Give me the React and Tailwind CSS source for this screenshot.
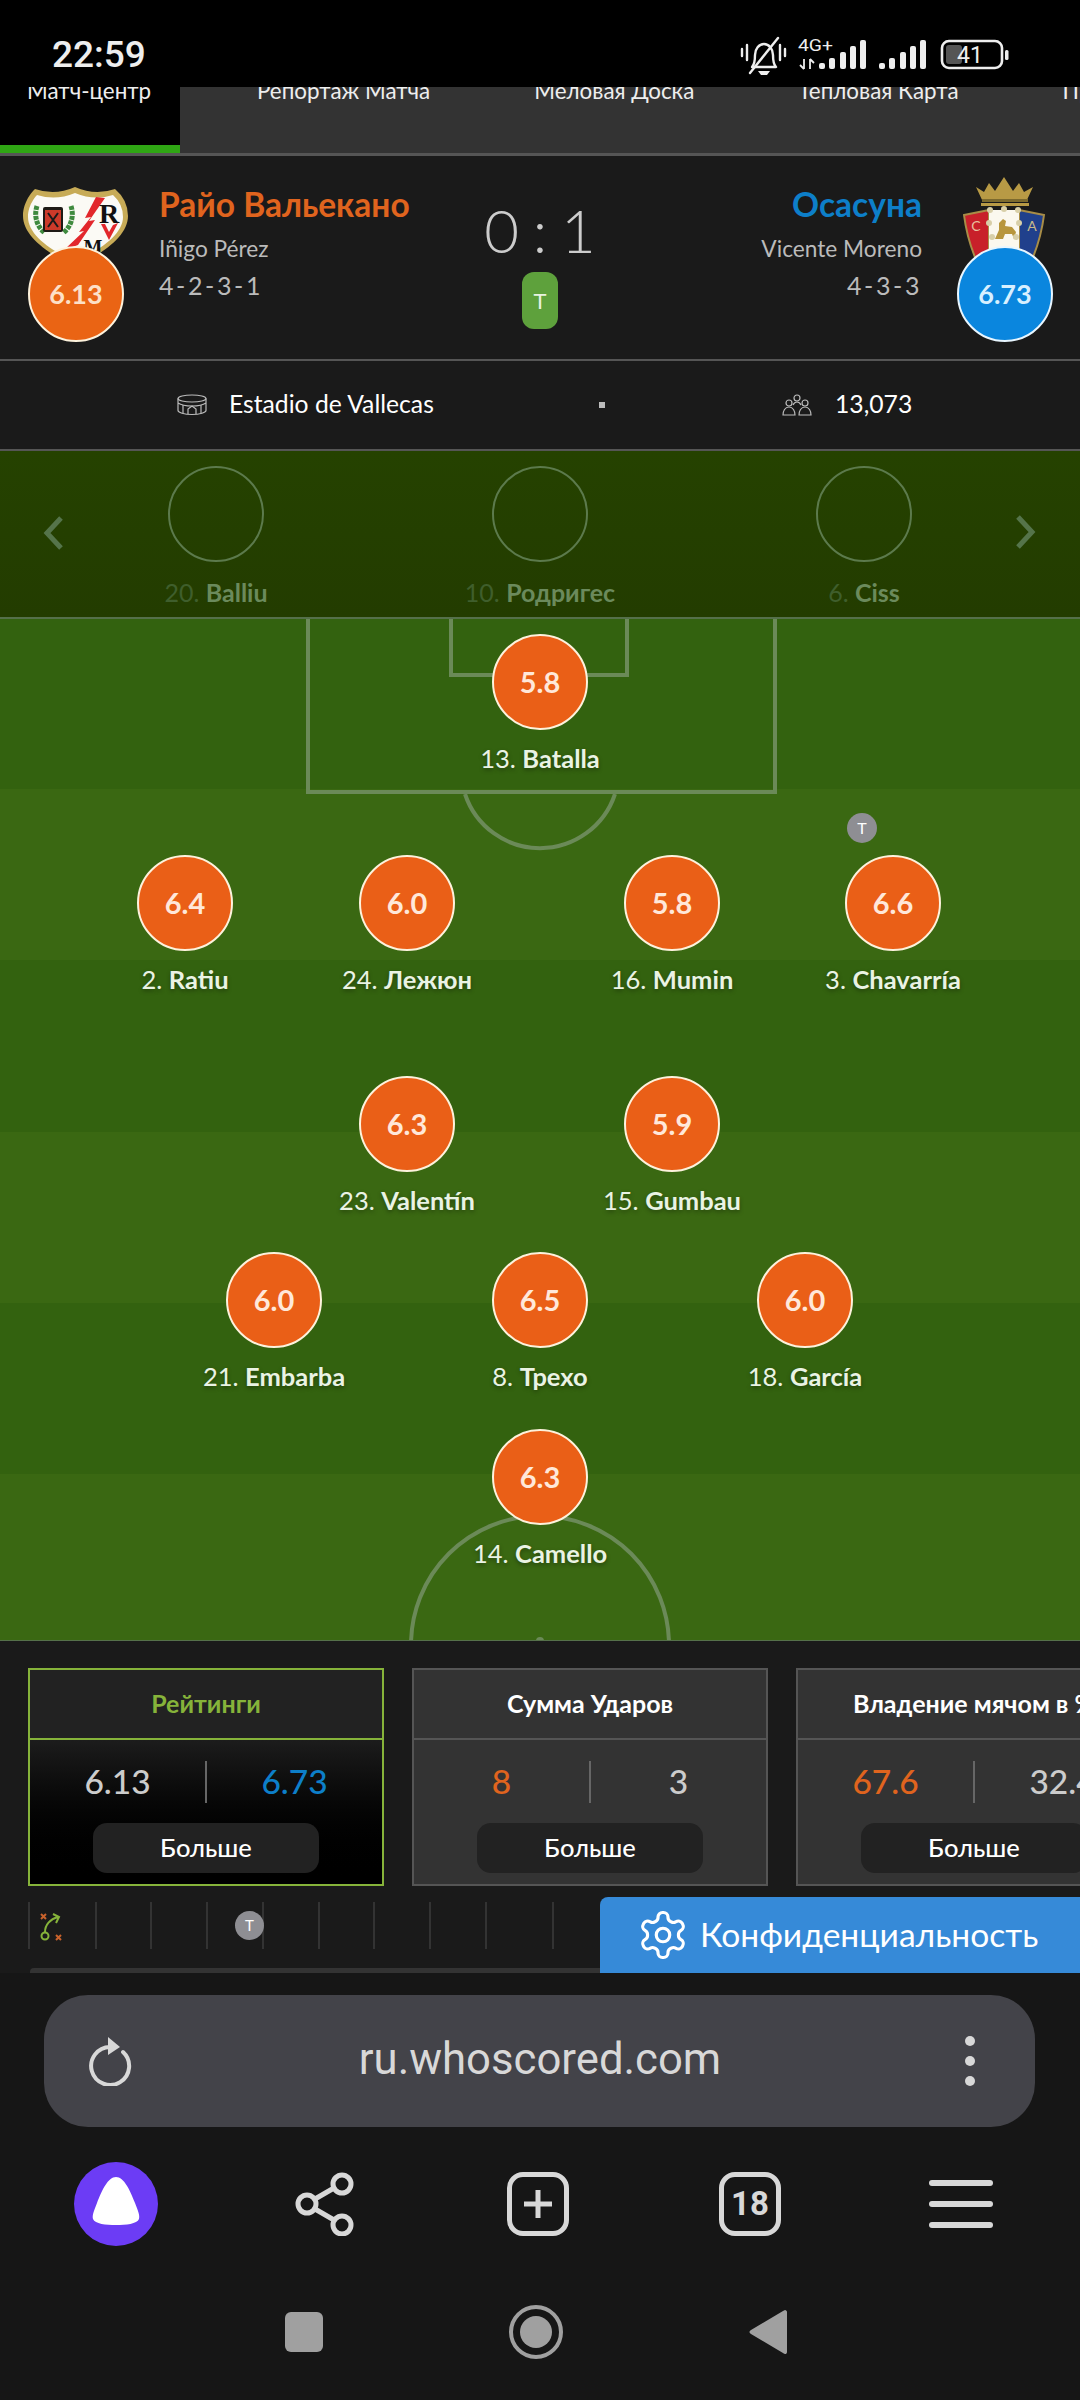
import React from 'react';

const tabs = ['Репортаж Матча', 'Меловая Доска', 'Тепловая Карта', 'Предыдущие'];

const bench = [
  { num: '20.', name: 'Balliu' },
  { num: '10.', name: 'Родригес' },
  { num: '6.', name: 'Ciss' },
];

// centre of the rating circle, in pitch coordinates
const players = [
  { x: 540, y: 63, rating: '5.8', num: '13.', name: 'Batalla' },
  { x: 185, y: 284, rating: '6.4', num: '2.', name: 'Ratiu' },
  { x: 407, y: 284, rating: '6.0', num: '24.', name: 'Лежюн' },
  { x: 672, y: 284, rating: '5.8', num: '16.', name: 'Mumin' },
  { x: 893, y: 284, rating: '6.6', num: '3.', name: 'Chavarría' },
  { x: 407, y: 505, rating: '6.3', num: '23.', name: 'Valentín' },
  { x: 672, y: 505, rating: '5.9', num: '15.', name: 'Gumbau' },
  { x: 274, y: 681, rating: '6.0', num: '21.', name: 'Embarba' },
  { x: 540, y: 681, rating: '6.5', num: '8.', name: 'Трехо' },
  { x: 805, y: 681, rating: '6.0', num: '18.', name: 'García' },
  { x: 540, y: 858, rating: '6.3', num: '14.', name: 'Camello' },
];

const stats = [
  { title: 'Рейтинги', home: '6.13', away: '6.73', active: true },
  { title: 'Сумма Ударов', home: '8', away: '3' },
  { title: 'Владение мячом в %', home: '67.6', away: '32.4' },
];

const StatusIcons = () => (
  <svg width="280" height="50" viewBox="0 0 280 50" fill="none">
    <g stroke="#eee" strokeWidth="2.4" strokeLinecap="round" strokeLinejoin="round">
      <path d="M7 19v7M12 15v15M45 15v15M50 19v7" />
      <path d="M17 37c3-3 3-7 3-12 0-6 4-11 9-11s9 5 9 11c0 5 0 9 3 12z" />
      <path d="M15 43 43 8" />
    </g>
    <path d="M23 41h12l-3 4h-6z" fill="#eee" />
    <text x="63" y="21" fill="#eee" fontSize="16" textLength="35" lengthAdjust="spacingAndGlyphs" fontFamily="Roboto, sans-serif">4G+</text>
    <path d="M69 29v10M65 35l4 4M75 39V29M75 29l4 4" stroke="#eee" strokeWidth="1.8" />
    {[[84, 33], [94, 28], [105, 22], [115, 16], [125, 10]].map(([x, y]) => (
      <rect key={x} x={x} y={y} width="6" height={39 - y} rx="2" fill="#eee" />
    ))}
    {[[144, 33], [154, 28], [165, 22], [175, 16], [185, 10]].map(([x, y]) => (
      <rect key={x} x={x} y={y} width="6" height={39 - y} rx="2" fill="#eee" />
    ))}
    <rect x="207" y="11" width="60" height="27" rx="7" stroke="#eee" strokeWidth="2.6" />
    <rect x="211" y="15" width="16" height="19" rx="3" fill="#555" />
    <text x="235" y="33" textAnchor="middle" fill="#eee" fontSize="23" fontFamily="Roboto, sans-serif">41</text>
    <rect x="270" y="20" width="3.5" height="10" rx="1.5" fill="#eee" />
  </svg>
);

const RayoCrest = () => (
  <svg width="106" height="80" viewBox="0 0 106 80" className="block">
    <path d="M12 3Q32 10 52 1 72 10 92 3 105 14 105 30C105 50 80 68 52 80 25 68 0 50 0 30 0 14 12 3 12 3Z" fill="#c7ab57" />
    <path d="M14 9Q33 15 52 7 71 15 90 9 100 18 100 31C100 48 78 64 52 75 26 64 5 48 5 31 5 18 14 9 14 9Z" fill="#fbfaf5" />
    <path d="M14 20c-3 9-1 20 8 27M48 20c3 9 1 20-8 27" stroke="#3f8a3f" strokeWidth="5" fill="none" strokeDasharray="4 1" />
    <rect x="20" y="21" width="20" height="25" rx="2" fill="#1e1a16" />
    <rect x="22" y="24" width="16" height="20" fill="#cc3a2a" />
    <path d="M25 27l10 14M35 27l-10 14" stroke="#1a1a1a" strokeWidth="2" />
    <path d="M73 11 62 32l6-1-12 15 5-1-20 19 14-5 17-25-6 1 16-23z" fill="#e2272c" />
    <text x="86" y="37" textAnchor="middle" fontSize="28" fontWeight="700" fill="#111" fontFamily="'Liberation Serif', serif">R</text>
    <path d="M78 38l8 16 9-17-5 2-4 7-4-8z" fill="#e2272c" />
    <text x="70" y="68" textAnchor="middle" fontSize="20" fontWeight="700" fill="#111" fontFamily="'Liberation Serif', serif">M</text>
  </svg>
);

const OsasunaCrest = () => (
  <svg width="84" height="85" viewBox="0 0 84 85" className="block">
    <path d="M13 10l8 5 5-9 6 8 9-14 9 14 6-8 5 9 9-5-7 15H20z" fill="#b89a45" />
    <rect x="19" y="22" width="46" height="3" fill="#7c6a2e" />
    <rect x="18" y="26" width="48" height="3" fill="#b89a45" />
    <path d="M1 38 26 33V85H14Q4 62 1 38Z" fill="#c8202a" stroke="#a88d47" strokeWidth="2" />
    <path d="M81 38 56 33V85H68Q78 62 81 38Z" fill="#20408c" stroke="#a88d47" strokeWidth="2" />
    <rect x="26" y="33" width="30" height="52" fill="#fbf8ee" />
    <path d="M32 62l4-9 0-7 4-4 3 2-1 5 7 1 4 5-2 7-2-5-7 0-2 5z" fill="#b8963c" />
    {[[27, 33], [41, 32], [55, 33], [26, 46], [56, 46], [29, 60], [53, 60]].map(([cx, cy]) => (
      <circle key={`${cx}-${cy}`} cx={cx} cy={cy} r="3" fill="#d8cfa8" />
    ))}
    <text x="13" y="54" textAnchor="middle" fontSize="14" fill="#e9c0a0" fontFamily="Lato, sans-serif">C</text>
    <text x="69" y="54" textAnchor="middle" fontSize="14" fill="#c9b98a" fontFamily="Lato, sans-serif">A</text>
  </svg>
);

const TeamRating = ({ value, color, textColor }) => (
  <div className={`relative w-[96px] h-[96px] rounded-full border-2 flex items-center justify-center text-[27px] font-bold ${color} ${textColor}`}>
    {value}
  </div>
);

const StadiumIcon = () => (
  <svg width="30" height="22" viewBox="0 0 30 22" fill="none" stroke="#bbb" strokeWidth="1.2">
    <ellipse cx="15" cy="4.5" rx="14" ry="3.5" />
    <path d="M1 4.5v12c0 2 6 4 14 4s14-2 14-4v-12M1 9c3 2 8 3 14 3s11-1 14-3" />
    <path d="M6 11v8M24 11v8M11 20v-5l4-3 4 3v5" />
  </svg>
);

const CrowdIcon = () => (
  <svg width="30" height="22" viewBox="0 0 30 22" fill="none" stroke="#bbb" strokeWidth="1.2">
    <circle cx="15" cy="4" r="3" />
    <circle cx="7" cy="9" r="3" />
    <circle cx="23" cy="9" r="3" />
    <path d="M1 21c0-4 2-8 6-8s6 4 6 8zM17 21c0-4 2-8 6-8s6 4 6 8zM11 11c1-2 2-3 4-3s3 1 4 3" />
  </svg>
);

const Player = ({ x, y, rating, num, name }) => (
  <div
    className="absolute -translate-x-1/2 flex flex-col items-center w-[240px]"
    style={{ left: x, top: y - 48 }}
  >
    <div className="w-[96px] h-[96px] rounded-full bg-[#ea5f17] border-2 border-[#fdf2dc] flex items-center justify-center text-[29px] font-bold text-[#ffe8da]">
      {rating}
    </div>
    <div className="mt-[14px] leading-[28px] text-[25.5px] text-[#eaf3e4] whitespace-nowrap [text-shadow:0_2px_4px_rgba(0,0,0,0.35)]">
      {num} <span className="font-bold">{name}</span>
    </div>
  </div>
);

const PitchLines = () => (
  <svg className="absolute inset-0" width="1080" height="1021" viewBox="0 0 1080 1021" fill="none" stroke="#6b8a58" strokeWidth="4">
    <path d="M308 -5V173H775V-5" />
    <path d="M451 -5V56H627V-5" />
    <path d="M465 175A79 79 0 0 0 615 175" />
    <circle cx="540" cy="1026" r="129" />
    <circle cx="540" cy="1022" r="4" fill="#6b8a58" stroke="none" />
  </svg>
);

const StatCard = ({ title, home, away, active }) => (
  <div className={`w-[356px] h-[218px] shrink-0 border-2 flex flex-col ${active ? 'border-[#86b33a]' : 'border-[#555] bg-[#333]'}`}>
    <div className={`h-[70px] shrink-0 flex items-center justify-center text-[25px] font-bold whitespace-nowrap border-b-2 ${active ? 'border-[#86b33a] text-[#86b33a] bg-[#222]' : 'border-[#555] text-white'}`}>
      {title}
    </div>
    <div className={`flex-1 flex flex-col ${active ? 'bg-gradient-to-b from-[#1c1c1c] to-black' : ''}`}>
      <div className="flex items-center h-[42px] mt-[21px] text-[33.5px] font-medium">
        <div className={`flex-1 text-center -mt-[2px] ${active ? 'text-[#ccc]' : 'text-[#e0641e]'}`}>{home}</div>
        <div className="w-[2px] h-[42px] bg-[#666]" />
        <div className={`flex-1 text-center -mt-[2px] ${active ? 'text-[#0d7fc9]' : 'text-[#ccc]'}`}>{away}</div>
      </div>
      <button className="w-[226px] h-[50px] mt-[20px] mx-auto pb-[2px] rounded-[14px] bg-[#222] text-white text-[25.5px] font-medium">
        Больше
      </button>
    </div>
  </div>
);

const TacticsIcon = () => (
  <svg width="24" height="30" viewBox="0 0 24 30" fill="none">
    <path d="M1 3l5 5M6 3 1 8M16 24l5 5M21 24l-5 5" stroke="#c8622c" strokeWidth="2" />
    <circle cx="5" cy="25" r="3.5" stroke="#86b33a" strokeWidth="2" />
    <path d="M5 21C5 14 10 8 18 6M13 3l6 3-3 6" stroke="#86b33a" strokeWidth="2" />
  </svg>
);

const GearIcon = () => (
  <svg width="54" height="54" viewBox="0 0 24 24" fill="none" stroke="#fff" strokeWidth="1.4" strokeLinecap="round" strokeLinejoin="round">
    <path d="M12.22 2h-.44a2 2 0 0 0-2 2v.18a2 2 0 0 1-1 1.73l-.43.25a2 2 0 0 1-2 0l-.15-.08a2 2 0 0 0-2.73.73l-.22.38a2 2 0 0 0 .73 2.73l.15.1a2 2 0 0 1 1 1.72v.51a2 2 0 0 1-1 1.74l-.15.09a2 2 0 0 0-.73 2.73l.22.38a2 2 0 0 0 2.73.73l.15-.08a2 2 0 0 1 2 0l.43.25a2 2 0 0 1 1 1.73V20a2 2 0 0 0 2 2h.44a2 2 0 0 0 2-2v-.18a2 2 0 0 1 1-1.73l.43-.25a2 2 0 0 1 2 0l.15.08a2 2 0 0 0 2.73-.73l.22-.39a2 2 0 0 0-.73-2.73l-.15-.08a2 2 0 0 1-1-1.74v-.5a2 2 0 0 1 1-1.74l.15-.09a2 2 0 0 0 .73-2.73l-.22-.38a2 2 0 0 0-2.73-.73l-.15.08a2 2 0 0 1-2 0l-.43-.25a2 2 0 0 1-1-1.73V4a2 2 0 0 0-2-2z" />
    <circle cx="12" cy="12" r="3" />
  </svg>
);

const ReloadIcon = () => (
  <svg width="44" height="50" viewBox="0 0 44 50" fill="none" stroke="#d8d8d8" strokeWidth="4" strokeLinecap="round">
    <path d="M35 16A19 19 0 1 1 22 11" />
    <path d="M20 1 32 11 20 19z" fill="#d8d8d8" stroke="none" />
  </svg>
);

const AliceIcon = () => (
  <svg width="84" height="84" viewBox="0 0 84 84">
    <circle cx="42" cy="42" r="42" fill="#6c3cf5" />
    <path d="M42 15C50 15 56 28 61 41 64 49 66 53 65 57 63 62 52 63 42 63 32 63 21 62 19 57 18 53 20 49 23 41 28 28 34 15 42 15Z" fill="#fff" />
  </svg>
);

const ShareIcon = () => (
  <svg width="64" height="64" viewBox="0 0 64 64" fill="none" stroke="#d8d8d8" strokeWidth="5">
    <circle cx="12" cy="32" r="9" />
    <circle cx="47" cy="12" r="9" />
    <circle cx="47" cy="53" r="9" />
    <path d="M20 27 39 16M20 37 39 48" />
  </svg>
);

const Bar = () => <div className="w-[64px] h-[6px] rounded-full bg-[#d8d8d8]" />;

export default function App() {
  return (
    <div className="w-[1080px] h-[2400px] overflow-hidden flex flex-col bg-[#161616] font-['Lato','Roboto',sans-serif]">
      {/* status bar */}
      <div className="h-[87px] shrink-0 bg-black relative z-10 flex justify-between">
        <div className="pl-[52px] pt-[33px] leading-[44px] text-[37px] font-medium text-[#eee] font-['Roboto',sans-serif]">22:59</div>
        <div className="pt-[30px] pr-[65px]"><StatusIcons /></div>
      </div>

      {/* tabs */}
      <div className="h-[69px] shrink-0 flex bg-[#333] border-b-[3px] border-[#555] overflow-hidden text-[22.4px] leading-[24px] text-[#eee]">
        <div className="w-[180px] shrink-0 bg-black border-b-[8px] border-[#2fa614] pl-[27px]">
          <div className="-mt-[8px] whitespace-nowrap">Матч-центр</div>
        </div>
        <div className="flex pl-[25px]">
          {tabs.map((t) => (
            <div key={t} className="px-[52px] -mt-[8px] whitespace-nowrap">{t}</div>
          ))}
        </div>
      </div>

      {/* match header */}
      <div className="h-[205px] shrink-0 bg-[#1a1a1a] border-b-2 border-[#555] grid grid-cols-[1fr_auto_1fr]">
        <div className="flex pl-[23px]">
          <div className="flex flex-col items-center pt-[30px]">
            <RayoCrest />
            <div className="-mt-[20px]">
              <TeamRating value="6.13" color="bg-[#ea6414] border-[#fdf2dc]" textColor="text-[#fde0c8]" />
            </div>
          </div>
          <div className="pt-[28px] pl-[30px]">
            <div className="leading-[40px] text-[33.5px] font-bold text-[#e0641e] whitespace-nowrap">Райо Вальекано</div>
            <div className="mt-[10px] leading-[30px] text-[22.7px] text-[#bbb] whitespace-nowrap">Iñigo Pérez</div>
            <div className="mt-[6px] leading-[30px] text-[25px] text-[#bbb] tracking-[2.6px] whitespace-nowrap">4-2-3-1</div>
          </div>
        </div>
        <div className="flex flex-col items-center pt-[44px]">
          <div className="leading-[60px] text-[60px] font-light text-[#ccc] whitespace-nowrap [word-spacing:-2.5px]">0 : 1</div>
          <div className="mt-[12px] w-[36px] h-[57px] rounded-[12px] bg-[#5ea13c] flex items-center justify-center text-[22px] text-[#e8f3e0]">T</div>
        </div>
        <div className="flex justify-end pr-[27px]">
          <div className="pt-[28px] pr-[35px] text-right">
            <div className="leading-[40px] text-[33.5px] font-bold text-[#0d7fc9] whitespace-nowrap">Осасуна</div>
            <div className="mt-[10px] leading-[30px] text-[22.7px] text-[#bbb] whitespace-nowrap">Vicente Moreno</div>
            <div className="mt-[6px] leading-[30px] text-[25px] text-[#bbb] tracking-[2.6px] whitespace-nowrap">4-3-3</div>
          </div>
          <div className="flex flex-col items-center pt-[21px]">
            <OsasunaCrest />
            <div className="-mt-[16px]">
              <TeamRating value="6.73" color="bg-[#0a86de] border-[#e8f6ff]" textColor="text-[#d8f0ff]" />
            </div>
          </div>
        </div>
      </div>

      {/* venue */}
      <div className="h-[90px] shrink-0 bg-[#1a1a1a] border-b-2 border-[#555] flex items-center text-[24.7px] text-white">
        <div className="w-[177px]" />
        <StadiumIcon />
        <div className="ml-[22px] w-[370px] pb-[2px] whitespace-nowrap">Estadio de Vallecas</div>
        <div className="w-[6px] h-[6px] bg-[#bbb]" />
        <div className="w-[177px]" />
        <CrowdIcon />
        <div className="ml-[23px] pb-[2px] whitespace-nowrap">13,073</div>
      </div>

      {/* substitutes */}
      <div className="h-[168px] shrink-0 relative bg-gradient-to-b from-[#254200] to-[#233c00] border-b-2 border-[#55704a] px-[54px]">
        <svg className="absolute left-[39px] top-[64px] text-[#55744a]" width="28" height="36" viewBox="0 0 28 36" fill="none" stroke="currentColor" strokeWidth="5"><path d="M22 3 8 18l14 15" /></svg>
        <div className="grid grid-cols-3">
          {bench.map((p) => (
            <div key={p.num} className="flex flex-col items-center pt-[15px]">
              <div className="w-[96px] h-[96px] rounded-full border-2 border-[#5c7a4c]" />
              <div className="mt-[14px] leading-[32px] text-[25px] text-[#3f5e2c] whitespace-nowrap">
                {p.num} <span className="font-bold text-[#6b8a5c]">{p.name}</span>
              </div>
            </div>
          ))}
        </div>
        <svg className="absolute right-[40px] top-[63px] text-[#55744a]" width="28" height="36" viewBox="0 0 28 36" fill="none" stroke="currentColor" strokeWidth="5"><path d="M6 3l14 15L6 33" /></svg>
      </div>

      {/* pitch */}
      <div className="h-[1021px] shrink-0 relative flex flex-col overflow-hidden">
        <div className="h-[170px] bg-[#33620f]" />
        <div className="h-[171px] bg-[#3a6812]" />
        <div className="h-[172px] bg-[#33620f]" />
        <div className="h-[171px] bg-[#3a6812]" />
        <div className="h-[171px] bg-[#33620f]" />
        <div className="h-[166px] bg-[#3a6812]" />
        <PitchLines />
        {players.map((p) => <Player key={p.num} {...p} />)}
        <div className="absolute left-[847px] top-[194px] w-[30px] h-[30px] rounded-full bg-[#8e8e93] flex items-center justify-center text-[16px] text-white">T</div>
      </div>

      {/* stats and timeline */}
      <div className="h-[333px] shrink-0 relative bg-[#1a1a1a] border-t border-[#55704a] flex flex-col overflow-hidden">
        <div className="flex gap-[28px] pl-[28px] pt-[27px]">
          {stats.map((s) => <StatCard key={s.title} {...s} />)}
        </div>
        <div className="mt-[16px] ml-[28px] h-[47px] grid grid-cols-[67px_55px_56px_56px_56px_55px_56px_56px_67px_2px] w-[526px]">
          {[0, 1, 2, 3, 4, 5, 6, 7, 8, 9].map((i) => (
            <div key={i} className="h-full border-l-2 border-[#333] flex items-center">
              {i === 0 && <div className="pl-[10px]"><TacticsIcon /></div>}
              {i === 3 && (
                <div className="ml-[27px] w-[29px] h-[29px] shrink-0 rounded-full bg-[#8e8e93] flex items-center justify-center text-[15px] text-white relative">T</div>
              )}
            </div>
          ))}
        </div>
        <div className="mt-[19px] ml-[30px] h-[5px] bg-[#333] rounded-tl-[4px]" />
        <div className="absolute right-0 bottom-0 w-[480px] h-[76px] bg-[#368ad8] rounded-tl-[8px] flex items-center pl-[36px] gap-[10px]">
          <GearIcon />
          <span className="text-[33.6px] pb-[2px] text-white whitespace-nowrap">Конфиденциальность</span>
        </div>
      </div>

      {/* browser chrome */}
      <div className="flex-1 bg-[#161616] pt-[22px]">
        <div className="mx-[44px] w-[991px] h-[132px] rounded-[44px] bg-[#434349] flex items-center justify-between pl-[44px] pr-[43px]">
          <ReloadIcon />
          <span className="text-[43.7px] pb-[2px] text-[#d8d8d8] font-['Roboto',sans-serif]">ru.whoscored.com</span>
          <div className="w-[44px] flex flex-col items-center gap-[10px]">
            <div className="w-[10px] h-[10px] rounded-full bg-[#d8d8d8]" />
            <div className="w-[10px] h-[10px] rounded-full bg-[#d8d8d8]" />
            <div className="w-[10px] h-[10px] rounded-full bg-[#d8d8d8]" />
          </div>
        </div>

        <div className="mt-[35px] pl-[10px] pr-[13px] grid grid-cols-5 h-[84px] items-center justify-items-center">
          <AliceIcon />
          <ShareIcon />
          <div className="w-[62px] h-[64px] rounded-[16px] border-[5px] border-[#d8d8d8] flex items-center justify-center">
            <svg width="32" height="32" viewBox="0 0 32 32" stroke="#d8d8d8" strokeWidth="5"><path d="M16 2v28M2 16h28" /></svg>
          </div>
          <div className="w-[62px] h-[64px] rounded-[16px] border-[5px] border-[#d8d8d8] flex items-center justify-center text-[33px] font-bold text-[#d8d8d8] font-['Roboto',sans-serif]">18</div>
          <div className="flex flex-col gap-[15px]"><Bar /><Bar /><Bar /></div>
        </div>

        <div className="mt-[58px] ml-[188px] w-[696px] h-[56px] grid grid-cols-3 items-center justify-items-center">
          <div className="w-[38px] h-[40px] rounded-[6px] bg-[#a0a0a0]" />
          <div className="w-[54px] h-[54px] rounded-full border-[4px] border-[#a0a0a0] flex items-center justify-center">
            <div className="w-[32px] h-[32px] rounded-full bg-[#a0a0a0]" />
          </div>
          <svg width="38" height="46" viewBox="0 0 38 46"><path d="M36 1C37 1 38 2 38 3V43C38 45 36 46 34 44L2 25C0 24 0 22 2 21L34 2Z" fill="#a0a0a0" /></svg>
        </div>
      </div>
    </div>
  );
}
